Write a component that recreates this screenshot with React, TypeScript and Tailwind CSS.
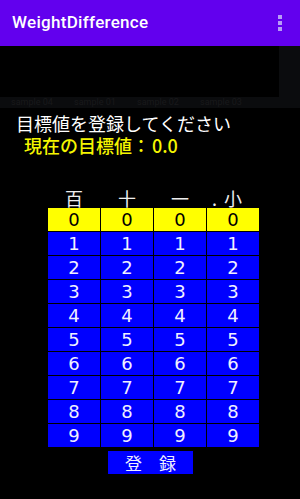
import React from "react";

const digits = [1, 2, 3, 4, 5, 6, 7, 8, 9];
const cjk = { fontFamily: '"Noto Sans CJK JP", "Noto Sans", sans-serif' };
const num = { fontFamily: '"DejaVu Sans", "Noto Sans CJK JP", sans-serif' };

export default function App() {
  return (
    <div className="h-[499px] w-[300px] overflow-hidden bg-black">
      {/* App bar */}
      <div className="flex h-[46px] items-center justify-between bg-[#6200ee] pl-[12px] pr-[17px]">
        <span
          className="text-[17px] font-medium tracking-[0.3px] text-white"
          style={{ fontFamily: "Roboto, sans-serif" }}
        >
          WeightDifference
        </span>
        <svg width="6" height="18" viewBox="0 0 6 18">
          <rect x="1" y="1" width="4" height="4" fill="#b79cf5" />
          <rect x="1" y="7" width="4" height="4" fill="#b79cf5" />
          <rect x="1" y="13" width="4" height="4" fill="#b79cf5" />
        </svg>
      </div>

      {/* Ad / tab strip */}
      <div className="h-[62px] bg-[#0b0c0e]">
        <div className="h-[51px] w-[279px] bg-black" />
        <div
          className="flex h-[11px] items-center pl-[11px] text-[9px] leading-none text-[#19191b]"
          style={{ fontFamily: "Roboto, sans-serif" }}
        >
          <span className="w-[63px]">sample 04</span>
          <span className="w-[63px]">sample 01</span>
          <span className="w-[63px]">sample 02</span>
          <span className="w-[63px]">sample 03</span>
        </div>
      </div>

      {/* Messages */}
      <div className="mt-[4px] h-[22px] pl-[16px] text-[18px] leading-[22px] text-white" style={cjk}>
        目標値を登録してください
      </div>
      <div className="h-[22px] pl-[24px] text-[18px] font-medium leading-[22px] text-[#f5f500]" style={cjk}>
        現在の目標値：<span className="ml-[2px]">0.0</span>
      </div>

      {/* Column headers */}
      <div
        className="ml-[48px] mt-[32px] grid h-[20px] w-[211px] grid-cols-4 gap-x-[1px] text-[18px] leading-[20px] text-[#eeeeee]"
        style={cjk}
      >
        <div className="text-center">百</div>
        <div className="text-center">十</div>
        <div className="text-center">一</div>
        <div className="flex justify-center">
          <span className="relative">
            <span className="absolute right-[100%] mr-[7px]">.</span>小
          </span>
        </div>
      </div>

      {/* Digit picker */}
      <div className="ml-[48px] grid w-[211px] grid-cols-4 gap-[1px] text-[18px]" style={num}>
        {[0, 1, 2, 3].map((c) => (
          <div key={"z" + c} className="flex h-[23px] items-center justify-center bg-[#ffff00] text-black">
            0
          </div>
        ))}
        {digits.map((d) =>
          [0, 1, 2, 3].map((c) => (
            <div
              key={d + "-" + c}
              className="flex h-[23px] items-center justify-center bg-[#0000ff] text-[#f0f0ff]"
            >
              {d}
            </div>
          ))
        )}
      </div>

      {/* Register button */}
      <div
        className="ml-[108px] mt-[4px] flex h-[23px] w-[85px] items-center justify-center bg-[#0000ff] text-[17px] text-[#f0f0ff]"
        style={cjk}
      >
        登　録
      </div>
    </div>
  );
}
